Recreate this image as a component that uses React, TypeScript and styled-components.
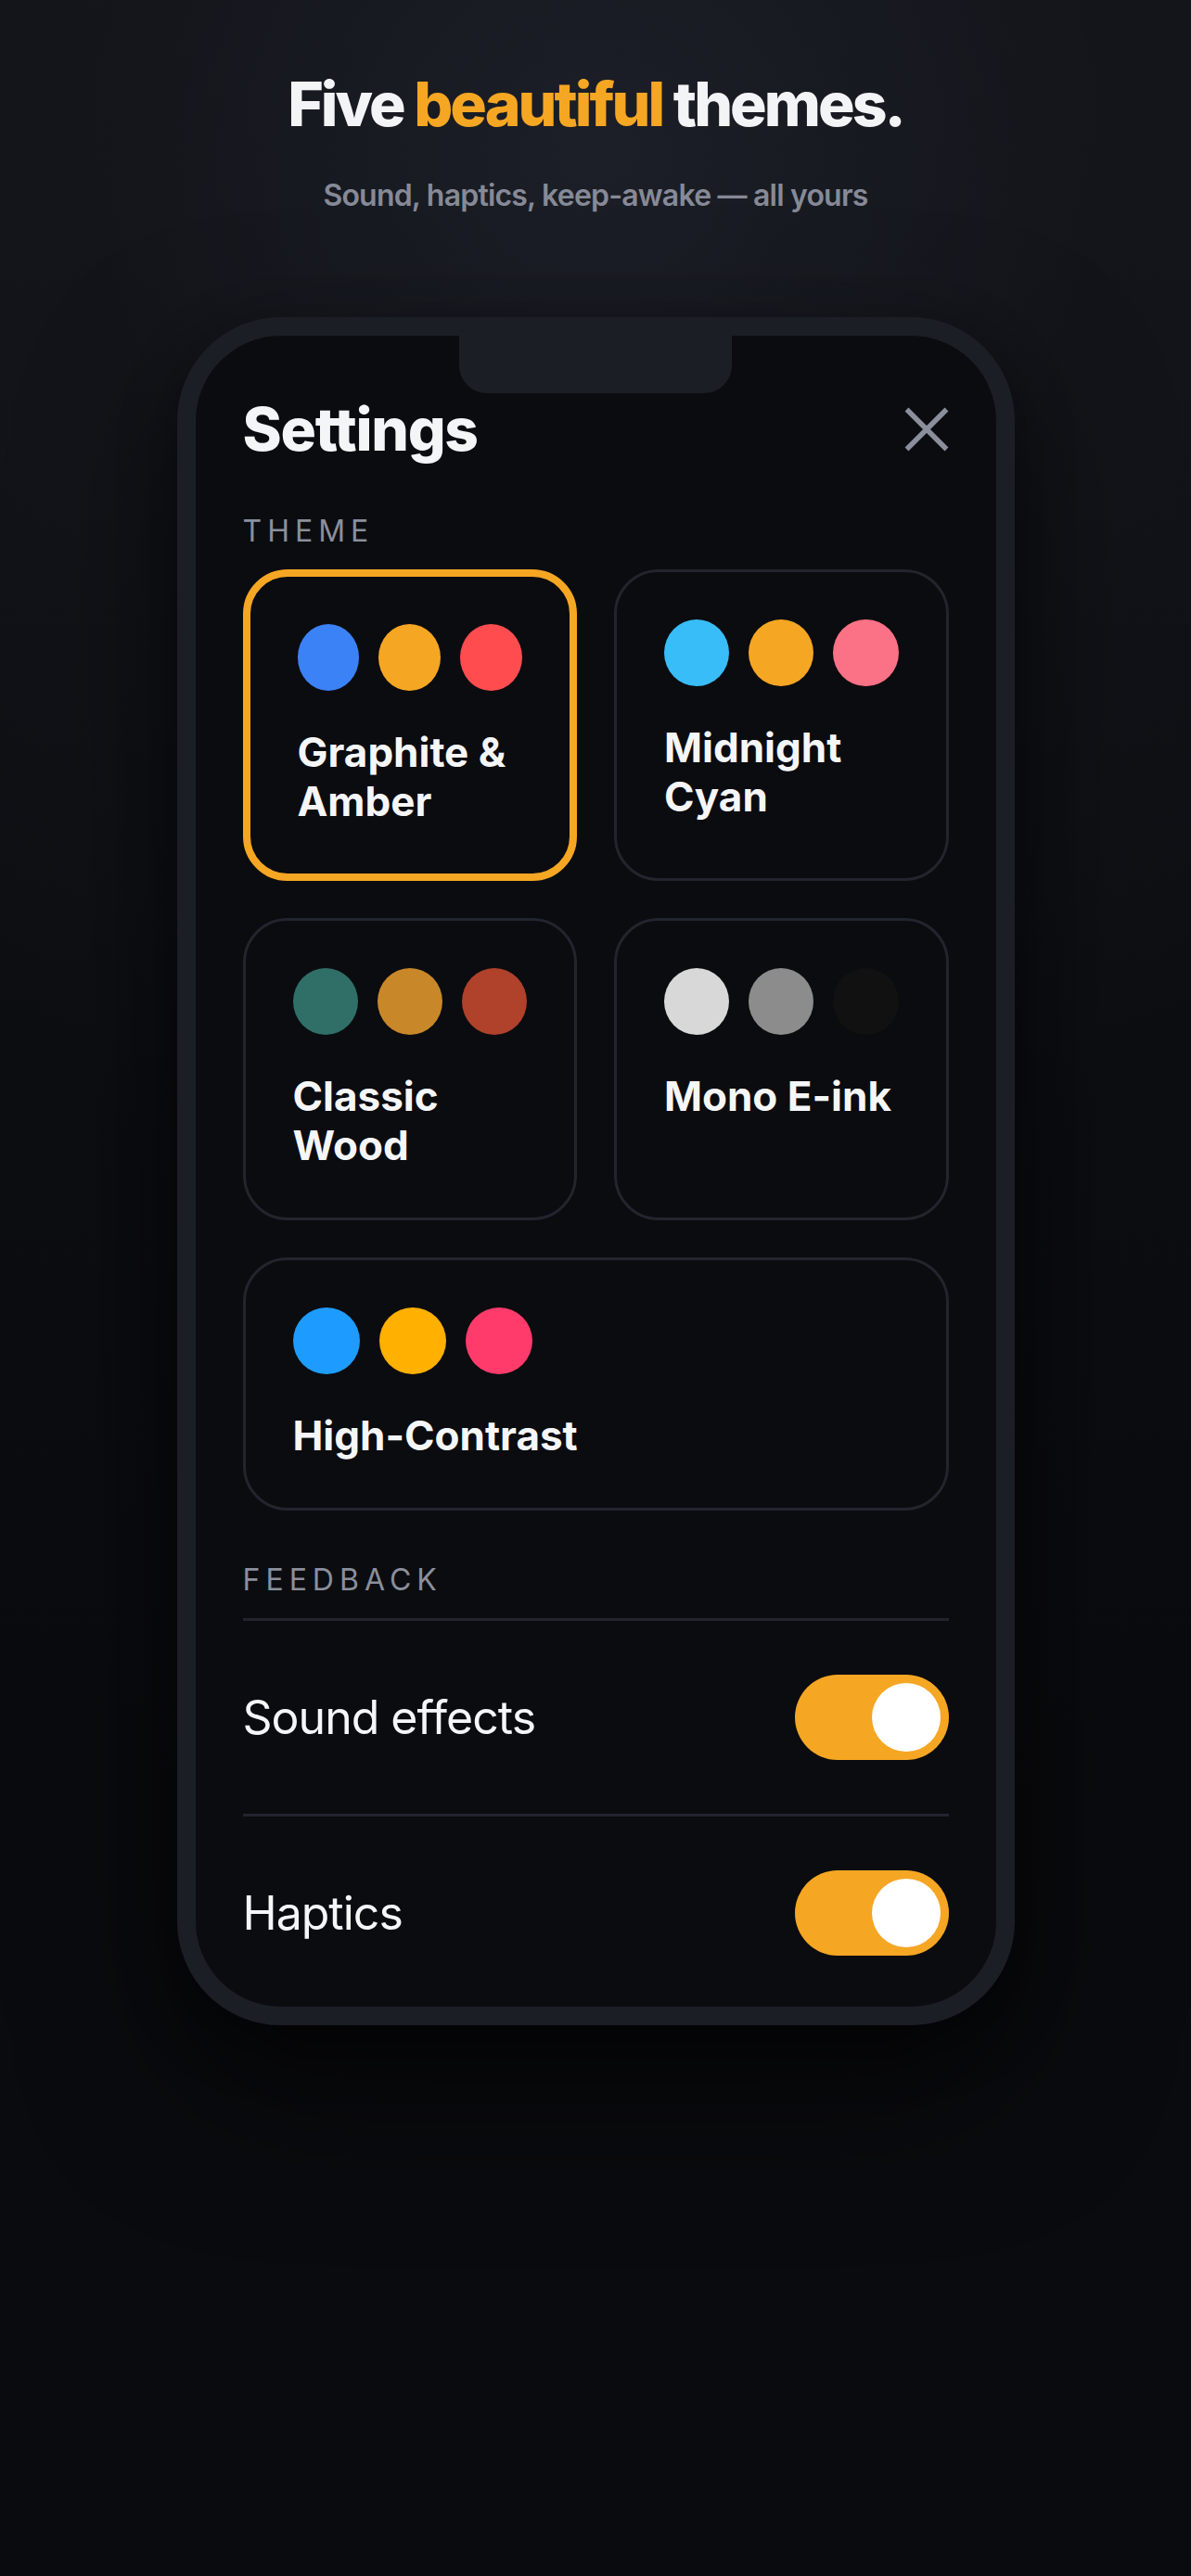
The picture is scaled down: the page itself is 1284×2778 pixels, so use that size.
import React from "react";
import styled, { createGlobalStyle } from "styled-components";

const GlobalStyle = createGlobalStyle`
  *, *::before, *::after { box-sizing: border-box; }
  html, body { margin: 0; padding: 0; background: #0a0b0e; }
  body {
    font-family: Inter, "Noto Sans", "Liberation Sans", sans-serif;
    -webkit-font-smoothing: antialiased;
  }
`;

const AMBER = "#f5a623";

const Page = styled.main`
  min-height: 2778px;
  display: flex;
  flex-direction: column;
  align-items: center;
  padding-top: 73px;
  background:
    radial-gradient(ellipse 95% 42% at 50% 6%, rgba(30, 33, 42, 0.85) 0%, rgba(20, 22, 28, 0.6) 45%, rgba(10, 11, 14, 0) 100%),
    linear-gradient(180deg, #121419 0%, #0d0e12 40%, #0a0b0e 70%, #0a0b0e 100%);
`;

const Headline = styled.h1`
  margin: 0;
  font-size: 66px;
  line-height: 1.2;
  font-weight: 800;
  letter-spacing: -0.045em;
  color: #f3f4f6;
  text-align: center;
`;

const Accent = styled.span`
  color: ${AMBER};
`;

const Subtitle = styled.p`
  margin: 38px 0 0;
  font-size: 32px;
  line-height: 1.3;
  font-weight: 600;
  letter-spacing: -0.025em;
  color: #868a97;
  text-align: center;
`;

const Phone = styled.section`
  position: relative;
  width: 903px;
  margin-top: 110px;
  border: 20px solid #1c1e26;
  border-radius: 112px;
  background: #0b0c10;
  overflow: hidden;
  box-shadow: 0 70px 160px rgba(0, 0, 0, 0.55), 0 20px 60px rgba(0, 0, 0, 0.35);
`;

const Notch = styled.div`
  position: absolute;
  top: 0;
  left: 50%;
  transform: translateX(-50%);
  width: 294px;
  height: 62px;
  background: #1c1e26;
  border-radius: 0 0 30px 30px;
`;

const Screen = styled.div`
  padding: 63px 51px 0;
  display: flex;
  flex-direction: column;
`;

const Header = styled.header`
  display: flex;
  align-items: center;
  justify-content: space-between;
`;

const Title = styled.h2`
  margin: 0;
  font-size: 64px;
  line-height: 1.2;
  font-weight: 800;
  letter-spacing: -0.02em;
  color: #f4f5f7;
`;

const CloseButton = styled.button`
  display: flex;
  align-items: center;
  justify-content: center;
  width: 48px;
  height: 48px;
  padding: 0;
  border: 0;
  background: none;
  color: #8b8f9c;
  cursor: pointer;
`;

const SectionLabel = styled.h3<{ $top: number }>`
  margin: ${(p) => p.$top}px 0 22px;
  font-size: 32px;
  line-height: 1.2;
  font-weight: 400;
  letter-spacing: 6px;
  text-transform: uppercase;
  color: #8a8f9c;
`;

const ThemeGrid = styled.div`
  display: grid;
  grid-template-columns: 1fr 1fr;
  gap: 40px;
`;

const ThemeCard = styled.button<{ $selected?: boolean; $wide?: boolean }>`
  display: flex;
  flex-direction: column;
  align-items: stretch;
  gap: 40px;
  padding: 51px;
  text-align: left;
  font: inherit;
  background: #0b0c10;
  border: ${(p) => (p.$selected ? `8px solid ${AMBER}` : "3px solid #22252e")};
  border-radius: 48px;
  grid-column: ${(p) => (p.$wide ? "1 / span 2" : "auto")};
  cursor: pointer;
`;

const Swatches = styled.div`
  display: flex;
  gap: 21px;
`;

const Swatch = styled.span<{ $color: string }>`
  flex: 0 1 72px;
  min-width: 0;
  height: 72px;
  border-radius: 50%;
  background: ${(p) => p.$color};
`;

const ThemeName = styled.span`
  font-size: 44px;
  line-height: 53px;
  font-weight: 700;
  letter-spacing: 0;
  color: #f5f6f8;
`;

const SettingsList = styled.div`
  display: flex;
  flex-direction: column;
`;

const SettingRow = styled.div`
  display: flex;
  align-items: center;
  justify-content: space-between;
  padding: 58px 0;
  border-top: 3px solid #22252e;

  &:last-child {
    padding-bottom: 55px;
  }
`;

const RowLabel = styled.span`
  font-size: 50px;
  line-height: 1.2;
  font-weight: 400;
  letter-spacing: -0.02em;
  color: #f5f6f8;
`;

const Track = styled.button<{ $on: boolean }>`
  position: relative;
  flex: none;
  width: 166px;
  height: 92px;
  padding: 0;
  border: 0;
  border-radius: 46px;
  background: ${(p) => (p.$on ? AMBER : "#2a2d36")};
  cursor: pointer;
`;

const Knob = styled.span<{ $on: boolean }>`
  position: absolute;
  top: 9px;
  left: ${(p) => (p.$on ? "83px" : "9px")};
  width: 74px;
  height: 74px;
  border-radius: 50%;
  background: #ffffff;
`;

type Theme = { name: string; colors: string[]; selected?: boolean; wide?: boolean };

const themes: Theme[] = [
  { name: "Graphite & Amber", colors: ["#3b82f6", "#f5a623", "#ff4d4f"], selected: true },
  { name: "Midnight Cyan", colors: ["#38bdf8", "#f5a623", "#fb7185"] },
  { name: "Classic Wood", colors: ["#2f6f68", "#c8882a", "#b0412b"] },
  { name: "Mono E-ink", colors: ["#d8d8d8", "#8c8c8c", "#111111"] },
  { name: "High-Contrast", colors: ["#1e9bff", "#ffb000", "#ff3b6b"], wide: true },
];

const CloseIcon = () => (
  <svg width="48" height="48" viewBox="0 0 48 48" fill="none" aria-hidden="true">
    <path d="M2.5 2.5 45.5 45.5M45.5 2.5 2.5 45.5" stroke="currentColor" strokeWidth="5.5" />
  </svg>
);

const Toggle = ({ on, label }: { on: boolean; label: string }) => (
  <Track $on={on} role="switch" aria-checked={on} aria-label={label}>
    <Knob $on={on} />
  </Track>
);

export default function App() {
  return (
    <>
      <GlobalStyle />
      <Page>
        <Headline>
          Five <Accent>beautiful</Accent> themes.
        </Headline>
        <Subtitle>Sound, haptics, keep-awake — all yours</Subtitle>

        <Phone>
          <Notch />
          <Screen>
            <Header>
              <Title>Settings</Title>
              <CloseButton aria-label="Close">
                <CloseIcon />
              </CloseButton>
            </Header>

            <SectionLabel $top={52}>Theme</SectionLabel>
            <ThemeGrid>
              {themes.map((t) => (
                <ThemeCard key={t.name} $selected={t.selected} $wide={t.wide}>
                  <Swatches>
                    {t.colors.map((c) => (
                      <Swatch key={c} $color={c} />
                    ))}
                  </Swatches>
                  <ThemeName>{t.name}</ThemeName>
                </ThemeCard>
              ))}
            </ThemeGrid>

            <SectionLabel $top={56}>Feedback</SectionLabel>
            <SettingsList>
              <SettingRow>
                <RowLabel>Sound effects</RowLabel>
                <Toggle on label="Sound effects" />
              </SettingRow>
              <SettingRow>
                <RowLabel>Haptics</RowLabel>
                <Toggle on label="Haptics" />
              </SettingRow>
            </SettingsList>
          </Screen>
        </Phone>
      </Page>
    </>
  );
}
